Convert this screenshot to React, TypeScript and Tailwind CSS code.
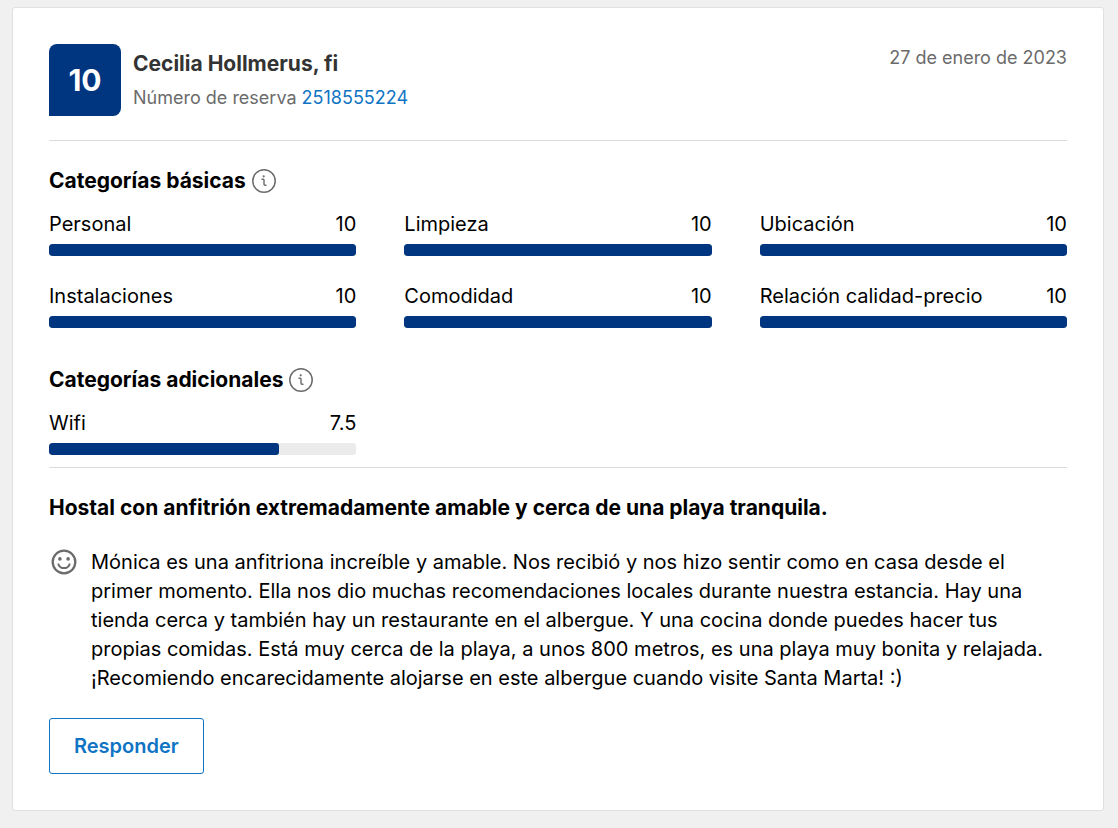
type Score = { label: string; value: number };

const basicScores: Score[] = [
  { label: "Personal", value: 10 },
  { label: "Limpieza", value: 10 },
  { label: "Ubicación", value: 10 },
  { label: "Instalaciones", value: 10 },
  { label: "Comodidad", value: 10 },
  { label: "Relación calidad-precio", value: 10 },
];

const extraScores: Score[] = [{ label: "Wifi", value: 7.5 }];

function InfoIcon() {
  return (
    <svg viewBox="0 0 24 24" className="size-6 text-[#6b6b6b]" fill="none" stroke="currentColor">
      <circle cx="12" cy="12" r="11.2" strokeWidth="1.5" />
      <path d="M10 10.3h1.200c.5 0 .8.3.8.8v4.100c0 .7.400 1.100 1 1.100h1" strokeWidth="1.4" strokeLinecap="round" />
      <circle cx="11.7" cy="7.3" r="1.1" fill="currentColor" stroke="none" />
    </svg>
  );
}

function SmileIcon() {
  return (
    <svg viewBox="0 0 30 30" className="size-[30px] shrink-0 text-[#6b6b6b]" fill="none" stroke="currentColor">
      <circle cx="15" cy="14" r="11.3" strokeWidth="2.3" />
      <circle cx="10.900" cy="10.900" r="1.8" fill="currentColor" stroke="none" />
      <circle cx="19.100" cy="10.900" r="1.8" fill="currentColor" stroke="none" />
      <path d="M9.4 16.300c1 2.400 3.100 3.800 5.600 3.800s4.600-1.400 5.600-3.800" strokeWidth="2" strokeLinecap="round" />
    </svg>
  );
}

function ScoreSection({ title, scores }: { title: string; scores: Score[] }) {
  return (
    <section>
      <div className="flex items-center gap-1.5">
        <h3 className="text-[21px] leading-6 font-bold">{title}</h3>
        <button type="button" aria-label={`Información: ${title}`}>
          <InfoIcon />
        </button>
      </div>
      <div className="mt-4 grid grid-cols-3 gap-x-12 gap-y-[25px]">
        {scores.map((score) => (
          <div key={score.label}>
            <div className="flex justify-between text-xl leading-[30px]">
              <span>{score.label}</span>
              <span>{score.value}</span>
            </div>
            <div
              className="mt-[5px] h-3 overflow-hidden rounded-[3px] bg-[#ebebeb]"
              role="meter"
              aria-label={score.label}
              aria-valuemin={0}
              aria-valuemax={10}
              aria-valuenow={score.value}
            >
              <div
                className="h-full rounded-[3px] bg-[#00357f]"
                style={{ width: `${score.value * 10}%` }}
              />
            </div>
          </div>
        ))}
      </div>
    </section>
  );
}

export default function App() {
  return (
    <main className="min-h-screen bg-[#f0f0f0] pt-[7px] pr-3.5 pb-4 pl-3 font-['Inter',sans-serif] text-black">
      <article className="rounded-[3px] border border-[#e0e0e0] bg-white p-9">
        <header className="flex items-start gap-3 border-b border-[#dcdcdc] pb-6">
          <div className="flex size-[72px] items-center justify-center rounded-lg rounded-bl-none bg-[#00357f] text-3xl font-bold text-white">
            10
          </div>
          <div className="pt-1.5">
            <h2 className="text-[21px] leading-7 font-bold text-[#333]">
              Cecilia Hollmerus, fi
            </h2>
            <p className="mt-2 text-lg leading-6 text-[#6b6b6b]">
              Número de reserva{" "}
              <a href="#" className="text-[#0f74c4]">
                2518555224
              </a>
            </p>
          </div>
          <time dateTime="2023-01-27" className="ml-auto text-lg leading-7 text-[#6b6b6b]">
            27 de enero de 2023
          </time>
        </header>

        <div className="flex flex-col gap-10 border-b border-[#dcdcdc] pt-7 pb-3">
          <ScoreSection title="Categorías básicas" scores={basicScores} />
          <ScoreSection title="Categorías adicionales" scores={extraScores} />
        </div>

        <h2 className="mt-6 text-[21px] leading-8 font-bold">
          Hostal con anfitrión extremadamente amable y cerca de una playa tranquila.
        </h2>
        <div className="mt-6 flex gap-3">
          <SmileIcon />
          <p className="text-xl leading-[29px]">
            Mónica es una anfitriona increíble y amable. Nos recibió y nos hizo sentir como en casa desde el
            primer momento. Ella nos dio muchas recomendaciones locales durante nuestra estancia. Hay una
            tienda cerca y también hay un restaurante en el albergue. Y una cocina donde puedes hacer tus
            propias comidas. Está muy cerca de la playa, a unos 800 metros, es una playa muy bonita y relajada.
            ¡Recomiendo encarecidamente alojarse en este albergue cuando visite Santa Marta! :)
          </p>
        </div>
        <button
          type="button"
          className="mt-[25px] h-14 rounded-[3px] border border-[#0f74c4] px-6 text-xl font-semibold text-[#0f74c4]"
        >
          Responder
        </button>
      </article>
    </main>
  );
}
